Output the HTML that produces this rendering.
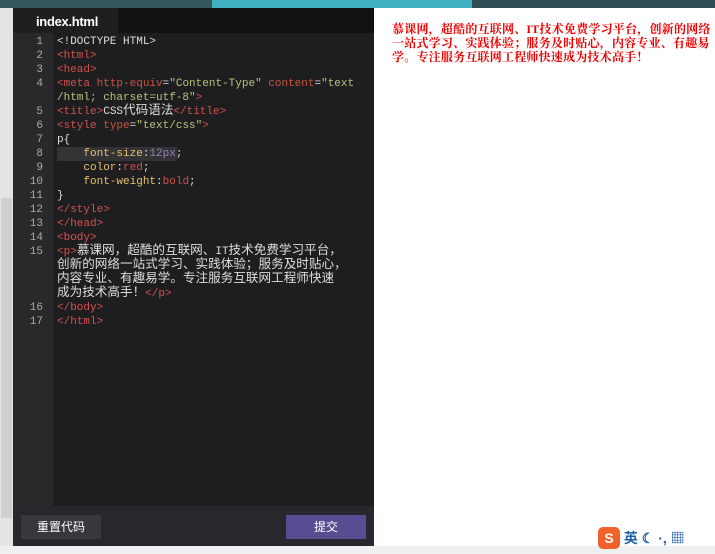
<!DOCTYPE html>
<html><head><meta charset="utf-8"><style>
*{margin:0;padding:0;box-sizing:border-box}
body{width:715px;height:554px;background:#fff;position:relative;overflow:hidden;font-family:"Liberation Sans","Noto Sans CJK SC",sans-serif}
.top1{position:absolute;top:0;left:0;width:212px;height:8px;background:#35575d}
.top2{position:absolute;top:0;left:212px;width:260px;height:8px;background:#3fb0c0}
.top3{position:absolute;top:0;left:472px;width:243px;height:8px;background:#2f4c52}
.sb{position:absolute;left:0;top:8px;width:13px;height:538px;background:#e4e4e4}
.sb .th{position:absolute;left:1px;top:190px;width:11px;height:320px;background:#cfcfcf}
.ed{position:absolute;left:13px;top:8px;width:361px;height:538px;background:#1e1e20}
.tabs{height:25px;background:#111}
.tab{width:105px;height:25px;background:#1f1f21;color:#fff;font-size:13px;font-weight:bold;padding:6px 0 0 23px;letter-spacing:-.3px}
.gut{position:absolute;left:0;top:25px;width:40px;height:473px;background:#29292b}
.code{position:absolute;left:0;top:27px;width:361px;font-family:"Liberation Mono","Noto Sans CJK SC",monospace;font-size:11px;line-height:14px;color:#ddd}
.r{height:14px;white-space:pre;position:relative}
.n{position:absolute;left:0;width:30px;text-align:right;color:#aaa}
.c{position:absolute;left:44px;height:14px}
.z{font-size:12.6px;font-family:"Noto Sans CJK SC",sans-serif;line-height:14px;vertical-align:top;display:inline-block;height:14px;position:relative;top:-3px}
.t{color:#d4504c}.a{color:#c8553d}.s{color:#b9c27a}.p{color:#e7c06a}.v{color:#d4504c}.q{color:#9a7fbf}
.hl{background:#333336;left:44px;width:120px;height:14px;position:absolute}
.bar{position:absolute;left:0;top:498px;width:361px;height:40px;background:#29272d}
.b1{position:absolute;left:8px;top:9px;width:80px;height:24px;background:#3a363e;color:#fff;font-size:12px;text-align:center;line-height:24px}
.b2{position:absolute;left:273px;top:9px;width:80px;height:24px;background:#584c92;color:#fff;font-size:12px;text-align:center;line-height:24px}
.out{position:absolute;left:392px;top:22px;width:323px;color:#e00;font-weight:bold;font-size:12px;letter-spacing:.22px;line-height:14px;font-family:"Liberation Serif","Noto Serif CJK SC",serif}
.bot{position:absolute;left:0;top:546px;width:715px;height:8px;background:#eef0f2}
.ime{position:absolute;left:598px;top:527px;font-size:14px;font-weight:bold;color:#1f5fa8}
</style></head><body>
<div class="top1"></div><div class="top2"></div><div class="top3"></div>
<div class="sb"><div class="th"></div></div>
<div class="ed">
<div class="tabs"><div class="tab">index.html</div></div>
<div class="gut"></div>
<div class="code">
<div class="r"><span class="n">1</span><span class="c">&lt;!DOCTYPE HTML&gt;</span></div>
<div class="r"><span class="n">2</span><span class="c t">&lt;html&gt;</span></div>
<div class="r"><span class="n">3</span><span class="c t">&lt;head&gt;</span></div>
<div class="r"><span class="n">4</span><span class="c"><span class="t">&lt;meta</span> <span class="a">http-equiv</span>=<span class="s">"Content-Type"</span> <span class="a">content</span>=<span class="s">"text</span></span></div>
<div class="r"><span class="c"><span class="s">/html; charset=utf-8"</span><span class="t">&gt;</span></span></div>
<div class="r"><span class="n">5</span><span class="c"><span class="t">&lt;title&gt;</span>CSS<span class="z">代码语法</span><span class="t">&lt;/title&gt;</span></span></div>
<div class="r"><span class="n">6</span><span class="c"><span class="t">&lt;style</span> <span class="a">type</span>=<span class="s">"text/css"</span><span class="t">&gt;</span></span></div>
<div class="r"><span class="n">7</span><span class="c">p{</span></div>
<div class="r"><span class="hl"></span><span class="n">8</span><span class="c">    <span class="p">font-size</span>:<span class="q">12px</span>;</span></div>
<div class="r"><span class="n">9</span><span class="c">    <span class="p">color</span>:<span class="v">red</span>;</span></div>
<div class="r"><span class="n">10</span><span class="c">    <span class="p">font-weight</span>:<span class="v">bold</span>;</span></div>
<div class="r"><span class="n">11</span><span class="c">}</span></div>
<div class="r"><span class="n">12</span><span class="c t">&lt;/style&gt;</span></div>
<div class="r"><span class="n">13</span><span class="c t">&lt;/head&gt;</span></div>
<div class="r"><span class="n">14</span><span class="c t">&lt;body&gt;</span></div>
<div class="r"><span class="n">15</span><span class="c"><span class="t">&lt;p&gt;</span><span class="z">慕课网，超酷的互联网、</span>IT<span class="z">技术免费学习平台，</span></span></div>
<div class="r"><span class="c"><span class="z">创新的网络一站式学习、实践体验；服务及时贴心，</span></span></div>
<div class="r"><span class="c"><span class="z">内容专业、有趣易学。专注服务互联网工程师快速</span></span></div>
<div class="r"><span class="c"><span class="z">成为技术高手！</span><span class="t">&lt;/p&gt;</span></span></div>
<div class="r"><span class="n">16</span><span class="c t">&lt;/body&gt;</span></div>
<div class="r"><span class="n">17</span><span class="c t">&lt;/html&gt;</span></div>
</div>
<div class="bar"><div class="b1">重置代码</div><div class="b2">提交</div></div>
</div>
<div class="out">慕课网，超酷的互联网、IT技术免费学习平台，创新的网络一站式学习、实践体验；服务及时贴心，内容专业、有趣易学。专注服务互联网工程师快速成为技术高手！</div>
<div class="bot"></div>
<div class="ime"><span style="display:inline-block;width:22px;height:22px;background:#f0622a;color:#fff;border-radius:5px;text-align:center;line-height:22px">S</span> 英 ☾ ·, ▦</div>
</body></html>
